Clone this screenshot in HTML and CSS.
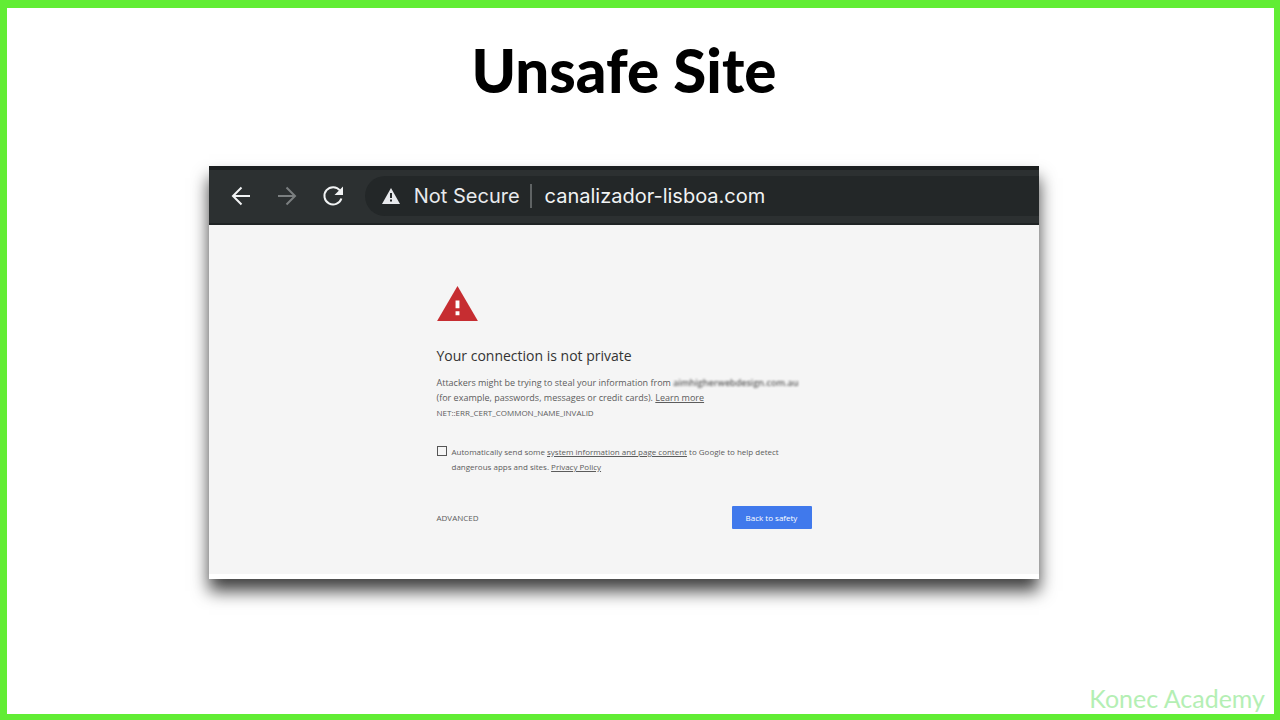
FILE: index.html
```html
<!DOCTYPE html>
<html lang="en">
<head>
  <meta charset="UTF-8" />
  <title>Unsafe Site</title>
  <link rel="stylesheet" href="styles.css">
</head>
<body>
  <main>
    <h1>Unsafe Site</h1>

    <div class="browser">
      <div class="toolbar">
        <button class="nav" aria-label="Back">
          <svg width="24" height="24" viewBox="0 0 24 24"><path d="M21 12H3.500M12.500 3.500L4 12l8.500 8.500" /></svg>
        </button>
        <button class="nav forward" aria-label="Forward">
          <svg width="24" height="24" viewBox="0 0 24 24"><path d="M3 12h17.500M11.500 3.500L20 12l-8.500 8.500" /></svg>
        </button>
        <button class="nav" aria-label="Reload">
          <svg width="24" height="24" viewBox="0 0 24 24"><path d="M19 6.500A8.700 8.700 0 1 0 20.400 14.500" /><path class="solid" d="M22 2.500v8.500h-8.500z" /></svg>
        </button>
        <div class="address">
          <svg width="18" height="16" viewBox="0 0 18 16"><path fill="#e8eaed" d="M9 0l9 16H0z" /><path fill="#232728" d="M8 5h2v5H8zM8 11.500h2v2H8z" /></svg>
          <span class="status">Not Secure</span>
          <span class="url">canalizador-lisboa.com</span>
        </div>
      </div>

      <div class="page">
        <div class="warning">
          <svg class="alert" width="41" height="35" viewBox="0 0 42 36"><path fill="#c62d31" d="M21 0l21 36H0z" /><path fill="#fff" d="M19 15h4v8h-4zM19 26h4v4h-4z" /></svg>
          <h2>Your connection is not private</h2>
          <p>Attackers might be trying to steal your information from <span class="hidden-site">aimhigherwebdesign.com.au</span><br>
          (for example, passwords, messages or credit cards). <a href="#">Learn more</a></p>
          <p class="code">NET::ERR_CERT_COMMON_NAME_INVALID</p>

          <div class="report">
            <input type="checkbox" id="report">
            <label for="report">Automatically send some <a href="#">system information and page content</a> to Google to help detect<br>dangerous apps and sites. <a href="#">Privacy Policy</a></label>
          </div>

          <div class="actions">
            <button class="advanced">ADVANCED</button>
            <button class="safety">Back to safety</button>
          </div>
        </div>
      </div>
    </div>
  </main>

  <footer>Konec Academy</footer>
</body>
</html>
```
FILE: styles.css
```css
* {
  box-sizing: border-box;
}
body {
  display: flex;
  flex-direction: column;
  min-height: 100vh;
  margin: 0;
  border: solid #61ed34;
  border-width: 8px 6px 6px 7px;
  background-color: #fff;
}
main {
  flex: 1;
  padding: 22px 33px 0 0;
}
h1 {
  margin: 0 0 56px;
  font-family: Lato, sans-serif;
  font-size: 60px;
  font-weight: 900;
  line-height: 80px;
  text-align: center;
  color: #000;
}
button {
  padding: 0;
  border: none;
  background: none;
  font-family: inherit;
  cursor: pointer;
}
svg {
  display: block;
  flex: none;
}

.browser {
  width: 67.3%;
  margin: 0 auto;
  box-shadow: 0 12px 16px 0 rgba(0, 0, 0, 0.75);
}
.toolbar {
  display: flex;
  align-items: center;
  gap: 22px;
  height: 59px;
  padding: 0 0 1px 20px;
  border-top: 4px solid #1b1e1f;
  border-bottom: 2px solid #1f2324;
  background-color: #2c3031;
}
.nav svg {
  fill: none;
  stroke: #f1f3f4;
  stroke-width: 2;
}
.nav .solid {
  fill: #f1f3f4;
  stroke: none;
}
.forward svg {
  stroke: #7b7f80;
}
.address {
  display: flex;
  flex: 1;
  align-items: center;
  height: 40px;
  margin-left: -2px;
  padding-left: 17px;
  border-radius: 20px 0 0 20px;
  background-color: #232728;
  font-family: Inter, sans-serif;
  font-size: 20px;
  line-height: 24px;
  color: #e8eaed;
}
.status {
  margin-left: 14px;
  padding-right: 10px;
  border-right: 2px solid #5f6364;
}
.url {
  margin-left: 13px;
  color: #f1f3f4;
}

.page {
  padding: 61px 24px 45px;
  border-bottom: 5px solid #fff;
  background-color: #f5f5f5;
  font-family: "Open Sans", sans-serif;
  font-size: 9px;
  line-height: 15px;
  color: #5c5c5c;
}
.warning {
  max-width: 375px;
  margin: 0 auto;
}
h2 {
  margin: 24px 0 8px;
  font-size: 14px;
  font-weight: 400;
  line-height: 22px;
  color: #333;
}
p {
  margin: 0;
  white-space: nowrap;
}
.code {
  font-size: 8px;
}
a {
  color: inherit;
}
.hidden-site {
  font-weight: 600;
  filter: blur(1px);
}
.report {
  display: flex;
  gap: 5px;
  margin-top: 24px;
  font-size: 8px;
  white-space: nowrap;
}
.report input {
  appearance: none;
  flex: none;
  width: 10px;
  height: 10px;
  margin: 2px 0 0;
  border: 1px solid #555;
}
.actions {
  display: flex;
  align-items: center;
  justify-content: space-between;
  margin-top: 32px;
}
.actions button {
  font-size: 8px;
  line-height: 23px;
  color: #5c5c5c;
}
.actions .safety {
  width: 80px;
  border-radius: 1px;
  background-color: #4079ec;
  color: #fff;
}

footer {
  padding-right: 9px;
  font-family: Lato, sans-serif;
  font-size: 25px;
  font-weight: 400;
  line-height: 32px;
  text-align: right;
  color: #b4efb4;
}
```
